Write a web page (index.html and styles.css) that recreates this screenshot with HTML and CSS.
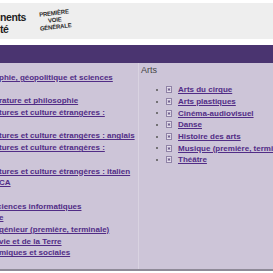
FILE: index.html
```html
<!DOCTYPE html>
<html lang="fr">
<head>
    <meta charset="UTF-8">
    <meta name="viewport" content="width=device-width, initial-scale=1.0">
    <title>Enseignements de spécialité</title>
    <link rel="stylesheet" href="styles.css">
</head>
<body>
    <!-- Bandeau -->
    <header class="masthead">
        <div class="title">nents<br>té</div>
        <div class="badge">
            <span>PREMIÈRE</span>
            <span>VOIE</span>
            <span>GÉNÉRALE</span>
        </div>
    </header>

    <nav class="menubar"></nav>

    <main class="content">
        <!-- Colonne gauche -->
        <section class="col col-left">
            <ul class="links">
                <li class="wrap"><a href="#">phie, géopolitique et sciences</a></li>
                <li><a href="#">rature et philosophie</a></li>
                <li class="wrap"><a href="#">tures et culture étrangères :</a></li>
                <li><a href="#">tures et culture étrangères : anglais</a></li>
                <li class="wrap"><a href="#">tures et culture étrangères :</a></li>
                <li><a href="#">tures et culture étrangères : italien</a></li>
                <li class="wrap"><a href="#">CA</a></li>
                <li class="cut"><a href="#">ciences informatiques</a></li>
                <li><a href="#">e</a></li>
                <li><a href="#">génieur (première, terminale)</a></li>
                <li><a href="#">vie et de la Terre</a></li>
                <li><a href="#">miques et sociales</a></li>
            </ul>
        </section>

        <!-- Colonne droite -->
        <section class="col col-right">
            <h3>Arts</h3>
            <ul class="subjects">
                <li><span class="dot"></span><svg class="doc" viewBox="0 0 6 7"><rect x="0.5" y="0.5" width="5" height="6" fill="#e6e0ec" stroke="#8f82a6"/><path d="M3 2v3M1.7 2.8l2.6 1.4M1.7 4.2l2.6-1.4" stroke="#5d4a80" stroke-width="0.7"/></svg><a href="#">Arts du cirque</a></li>
                <li><span class="dot"></span><svg class="doc" viewBox="0 0 6 7"><rect x="0.5" y="0.5" width="5" height="6" fill="#e6e0ec" stroke="#8f82a6"/><path d="M3 2v3M1.7 2.8l2.6 1.4M1.7 4.2l2.6-1.4" stroke="#5d4a80" stroke-width="0.7"/></svg><a href="#">Arts plastiques</a></li>
                <li><span class="dot"></span><svg class="doc" viewBox="0 0 6 7"><rect x="0.5" y="0.5" width="5" height="6" fill="#e6e0ec" stroke="#8f82a6"/><path d="M3 2v3M1.7 2.8l2.6 1.4M1.7 4.2l2.6-1.4" stroke="#5d4a80" stroke-width="0.7"/></svg><a href="#">Cinéma-audiovisuel</a></li>
                <li><span class="dot"></span><svg class="doc" viewBox="0 0 6 7"><rect x="0.5" y="0.5" width="5" height="6" fill="#e6e0ec" stroke="#8f82a6"/><path d="M3 2v3M1.7 2.8l2.6 1.4M1.7 4.2l2.6-1.4" stroke="#5d4a80" stroke-width="0.7"/></svg><a href="#">Danse</a></li>
                <li><span class="dot"></span><svg class="doc" viewBox="0 0 6 7"><rect x="0.5" y="0.5" width="5" height="6" fill="#e6e0ec" stroke="#8f82a6"/><path d="M3 2v3M1.7 2.8l2.6 1.4M1.7 4.2l2.6-1.4" stroke="#5d4a80" stroke-width="0.7"/></svg><a href="#">Histoire des arts</a></li>
                <li><span class="dot"></span><svg class="doc" viewBox="0 0 6 7"><rect x="0.5" y="0.5" width="5" height="6" fill="#e6e0ec" stroke="#8f82a6"/><path d="M3 2v3M1.7 2.8l2.6 1.4M1.7 4.2l2.6-1.4" stroke="#5d4a80" stroke-width="0.7"/></svg><a href="#">Musique (première, terminale)</a></li>
                <li><span class="dot"></span><svg class="doc" viewBox="0 0 6 7"><rect x="0.5" y="0.5" width="5" height="6" fill="#e6e0ec" stroke="#8f82a6"/><path d="M3 2v3M1.7 2.8l2.6 1.4M1.7 4.2l2.6-1.4" stroke="#5d4a80" stroke-width="0.7"/></svg><a href="#">Théâtre</a></li>
            </ul>
        </section>
    </main>
</body>
</html>
```

FILE: styles.css
```css
* {
    margin: 0;
    padding: 0;
    box-sizing: border-box;
}

body {
    width: 273px;
    height: 273px;
    overflow: hidden;
    background: #fff;
    font-family: "Liberation Sans", Arial, sans-serif;
}

.masthead {
    display: flex;
    align-items: flex-start;
    margin-top: 3px;
    height: 36px;
    background: #eeeeee;
}

.title {
    padding-top: 8px;
    font-size: 10.5px;
    font-weight: bold;
    line-height: 12px;
    letter-spacing: -0.4px;
    color: #1e1e1e;
    white-space: nowrap;
}

.badge {
    display: flex;
    flex-direction: column;
    align-items: center;
    margin-left: 13px;
    margin-top: 7px;
    font-size: 6px;
    font-weight: bold;
    line-height: 7px;
    letter-spacing: -0.2px;
    color: #2a2a2a;
    transform: rotate(-7deg);
}

.menubar {
    margin-top: 6px;
    height: 18px;
    background: #4a3470;
}

.content {
    display: grid;
    grid-template-columns: 138px 1fr;
    height: 208px;
    background: #cdc5d8;
    border-bottom: 2px solid #8f8a98;
}

.col {
    overflow: hidden;
    white-space: nowrap;
}

.col a {
    color: #512c86;
    font-weight: bold;
    text-decoration: underline;
}

.col-left {
    padding-top: 9px;
}

.links li {
    list-style: none;
    margin-left: -1px;
    font-size: 8px;
    line-height: 11.7px;
}

.links li.wrap {
    margin-bottom: 11.7px;
}

.links li.cut {
    margin-left: -3px;
}

.col-right {
    padding: 2px 0 0 2px;
    border-left: 1px solid #d9d3e1;
    overflow: visible;
}

.col-right h3 {
    font-size: 9px;
    font-weight: normal;
    line-height: 11.7px;
    color: #444;
}

.subjects {
    margin-top: 7.3px;
    padding-left: 15px;
    list-style: none;
}

.subjects li {
    display: flex;
    align-items: center;
    height: 11.7px;
    font-size: 8px;
}

.dot {
    width: 2px;
    height: 2px;
    border-radius: 50%;
    background: #555;
}

.doc {
    width: 6px;
    height: 7px;
    margin: 0 6px 0 8px;
    flex-shrink: 0;
}
```
